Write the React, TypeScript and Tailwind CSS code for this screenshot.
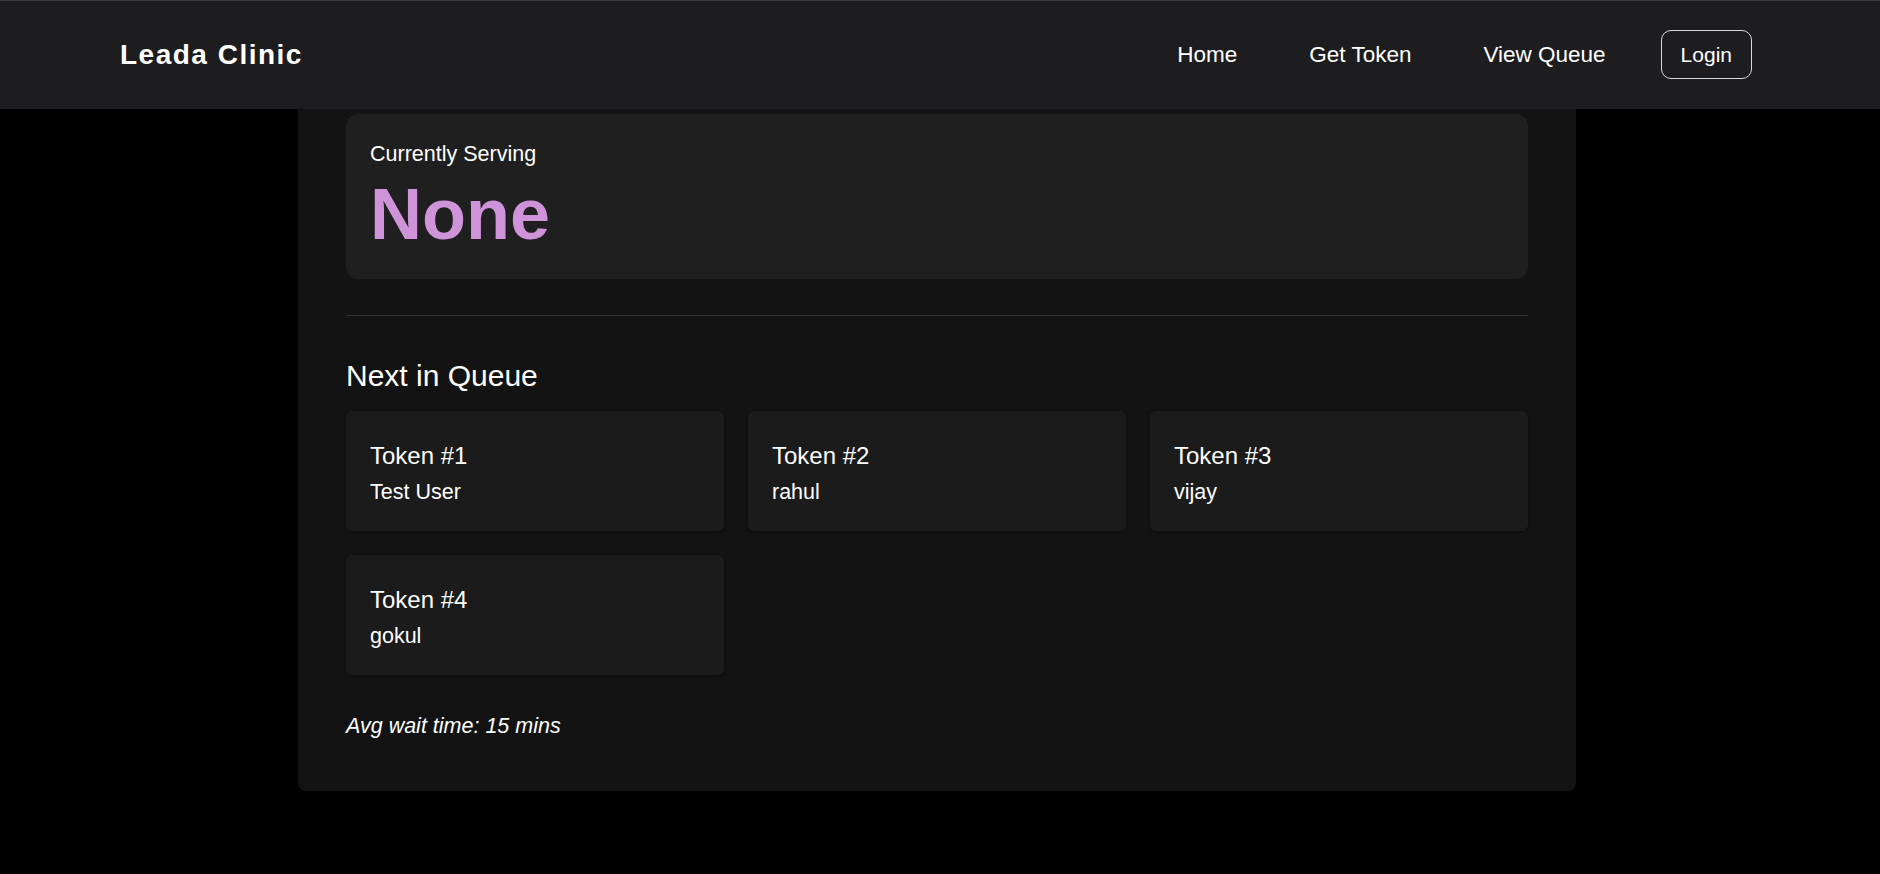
import React from "react";

const queue = [
  { token: 1, name: "Test User" },
  { token: 2, name: "rahul" },
  { token: 3, name: "vijay" },
  { token: 4, name: "gokul" },
];

const App = () => {
  return (
    <div className="min-h-screen bg-black text-white font-['Liberation_Sans',Arial,sans-serif]">
      <header className="h-[109px] bg-[#1d1d1f] border-t border-[#3a3a3a] flex items-center justify-between pl-[120px] pr-[128px]">
        <div className="text-[28px] font-bold tracking-[1.5px]">Leada Clinic</div>
        <nav className="flex items-center">
          <div className="flex gap-[72px] text-[22.5px]">
            <a href="#">Home</a>
            <a href="#">Get Token</a>
            <a href="#">View Queue</a>
          </div>
          <button className="ml-[55px] -mt-[2px] border border-[#d9d9d9] rounded-[10px] px-[19px] py-2 text-[21px] leading-[31px]">
            Login
          </button>
        </nav>
      </header>

      <div className="flex justify-center pr-[6px]">
        <main className="w-[1278px] bg-[#131313] rounded-b-lg px-12 pt-[5px] pb-12">
          <div className="bg-[#1f1f1f] rounded-xl px-6 pt-[25px] pb-[29px]">
            <p className="text-[21.5px] leading-[31px]">Currently Serving</p>
            <h1 className="mt-[8px] text-[72px] leading-[72px] font-bold text-[#ce93d8]">None</h1>
          </div>

          <div className="mt-9 h-px bg-[#333]" />

          <h2 className="mt-10 text-[30px] leading-[40px]">Next in Queue</h2>

          <div className="mt-[15px] grid grid-cols-3 gap-6">
            {queue.map((q) => (
              <div
                key={q.token}
                className="bg-[#1b1b1b] rounded-md px-6 pt-[28px] pb-[23px] shadow-[0_1px_3px_rgba(0,0,0,0.45)]"
              >
                <h3 className="text-[24px] leading-[34px]">Token #{q.token}</h3>
                <p className="mt-[4px] text-[21.5px] leading-[31px]">{q.name}</p>
              </div>
            ))}
          </div>

          <p className="mt-9 text-[21.5px] leading-[31.5px] italic">Avg wait time: 15 mins</p>
        </main>
      </div>
    </div>
  );
};

export default App;
